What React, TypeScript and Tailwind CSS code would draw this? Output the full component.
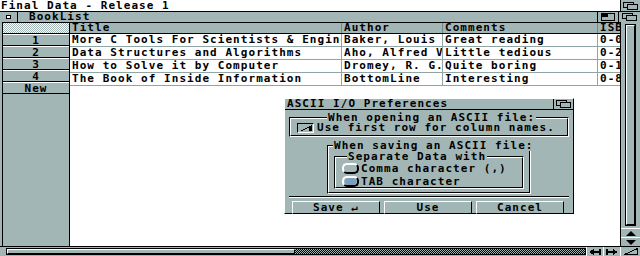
import React from "react";

const F = { fontFamily: '"DejaVu Sans Mono", "Liberation Mono", monospace' };
const gray = "bg-[#a3b6b6]";

function Depth() {
  return (
    <svg width="16" height="8" viewBox="0 0 16 8" shapeRendering="crispEdges">
      <rect x="0.5" y="0.5" width="10" height="5" fill="#a3b6b6" stroke="#000" />
      <rect x="4.5" y="2.5" width="10" height="5" fill="#a3b6b6" stroke="#000" />
    </svg>
  );
}

function Zoom() {
  return (
    <svg width="14" height="8" viewBox="0 0 14 8" shapeRendering="crispEdges">
      <rect x="0.5" y="0.5" width="13" height="7" fill="#a3b6b6" stroke="#000" />
      <rect x="1" y="1" width="6" height="3" fill="#000" />
    </svg>
  );
}

const rows = [
  ["1", "More C Tools For Scientists & Engineers", "Baker, Louis", "Great reading", "0-07"],
  ["2", "Data Structures and Algorithms", "Aho, Alfred V.", "Little tedious", "0-20"],
  ["3", "How to Solve it by Computer", "Dromey, R. G.", "Quite boring", "0-13"],
  ["4", "The Book of Inside Information", "BottomLine", "Interesting", "0-88"],
];

const cols = "grid grid-cols-[271px_101px_155px_23px]";
const cell = "h-[12px] overflow-hidden whitespace-nowrap pl-[2px]";

function Frame({ label, className, children, labelClass }: { label: string; className: string; children?: React.ReactNode; labelClass: string }) {
  return (
    <div className={"relative border border-t-black border-l-black border-b-white border-r-white " + className}>
      <div className="h-full w-full border border-t-white border-l-white border-b-black border-r-black">
        {children}
      </div>
      <div className={"absolute top-[-6px] h-[11px] leading-[11px] px-[1px] bg-[#a3b6b6] whitespace-nowrap " + labelClass}>{label}</div>
    </div>
  );
}

function Btn({ children }: { children: React.ReactNode }) {
  return (
    <div className="w-[88px] h-[13px] border border-t-white border-l-white border-b-black border-r-black flex items-center justify-center leading-[11px]">
      {children}
    </div>
  );
}

function Radio({ on }: { on?: boolean }) {
  return (
    <div className="w-[17px] h-[11px] rounded-[5px] border-2 border-t-white border-l-white border-b-black border-r-black flex items-center justify-center">
      {on && <div className="w-[11px] h-[7px] rounded-[3px] bg-[#7aa0bd]" />}
    </div>
  );
}

export default function App() {
  return (
    <div className="relative w-[640px] h-[256px] overflow-hidden bg-white text-black font-bold text-[11px] tracking-[1.05px] flex flex-col" style={F}>
      {/* screen title bar */}
      <div className="h-[11px] flex items-stretch bg-white">
        <div className="flex-1 leading-[11px] pl-[1px] whitespace-nowrap">Final Data - Release 1</div>
        <div className={"w-[20px] flex items-center justify-center border-l border-black " + gray}>
          <Depth />
        </div>
      </div>
      {/* window */}
      <div className="flex-1 flex flex-col">
        <div className={"h-[11px] flex items-stretch border-t border-black " + gray}>
          <div className="w-[18px] border-r border-black flex items-center justify-center">
            <div className="w-[5px] h-[4px] border border-black bg-white" />
          </div>
          <div className="flex-1 pl-[11px] leading-[10px] whitespace-nowrap">BookList</div>
          <div className="w-[21px] flex items-center justify-center border-l border-black">
            <Zoom />
          </div>
          <div className="w-[22px] flex items-center justify-center border-l border-black">
            <Depth />
          </div>
        </div>
        <div className="flex-1 flex min-h-0">
          <div className={"w-[3px] border-r border-black " + gray} />
          {/* row label column */}
          <div className={"w-[67px] flex flex-col border-r border-black " + gray}>
            <div className="h-[12px] border-y border-black bg-[repeating-conic-gradient(#ffffff_0%_25%,#a3b6b6_0%_50%)] bg-[length:2px_2px]" />
            {["1", "2", "3", "4", "New"].map((n) => (
              <div key={n} className="h-[12px] border-b border-black text-center leading-[11px] border-t border-t-white">
                {n}
              </div>
            ))}
            <div className="flex-1" />
          </div>
          {/* data */}
          <div className="w-[550px] flex flex-col">
            <div className={cols + " h-[12px] border-y border-black " + gray}>
              {["Title", "Author", "Comments", "ISBN"].map((h, i) => (
                <div key={h} className={"overflow-hidden whitespace-nowrap pl-[2px] leading-[10px] " + (i > 0 ? "border-l border-[#6f8a8a]" : "")}>
                  {h}
                </div>
              ))}
            </div>
            {rows.map((r) => (
              <div key={r[0]} className={cols + " border-b border-[#8fa6a6]"}>
                {r.slice(1).map((c, i) => (
                  <div key={i} className={cell + " leading-[12px] " + (i > 0 ? "border-l border-[#8fa6a6]" : "")}>
                    {c}
                  </div>
                ))}
              </div>
            ))}
          </div>
          {/* vertical scroller */}
          <div className={"w-[20px] flex flex-col border-l border-black " + gray}>
            <div className="flex-1 px-[4px] pt-[2px] pb-[2px] flex">
              <div className="flex-1 border border-black flex">
                <div className="flex-1 border border-t-white border-l-white border-b-black border-r-black" />
              </div>
            </div>
            <div className="h-[9px] border-t border-white flex items-center justify-center">
              <svg width="10" height="5" viewBox="0 0 10 5"><polygon points="5,0 10,5 0,5" fill="#000" /></svg>
            </div>
            <div className="h-[9px] border-t border-white flex items-center justify-center">
              <svg width="10" height="5" viewBox="0 0 10 5"><polygon points="0,0 10,0 5,5" fill="#000" /></svg>
            </div>
          </div>
        </div>
        {/* horizontal scroller */}
        <div className={"h-[10px] flex border-t border-black " + gray}>
          <div className="w-[586px] flex items-stretch pl-[6px] py-[1px]">
            <div className="flex-1 flex border border-black">
              <div className="w-[288px] border border-t-white border-l-white border-b-black border-r-black" />
              <div className="flex-1 bg-[repeating-conic-gradient(#000000_0%_25%,#a3b6b6_0%_50%)] bg-[length:2px_2px]" />
            </div>
          </div>
          <div className="w-[17px] flex items-center justify-center border-l border-white">
            <svg width="12" height="6" viewBox="0 0 12 6" shapeRendering="crispEdges"><polygon points="0,3 5,0 5,2 12,2 12,4 5,4 5,6" fill="#000" /><rect x="10" y="0" width="2" height="6" fill="#000" /></svg>
          </div>
          <div className="w-[17px] flex items-center justify-center border-l border-white">
            <svg width="12" height="6" viewBox="0 0 12 6" shapeRendering="crispEdges"><polygon points="12,3 7,0 7,2 0,2 0,4 7,4 7,6" fill="#000" /><rect x="0" y="0" width="2" height="6" fill="#000" /></svg>
          </div>
          <div className="w-[20px] flex items-center justify-center border-l border-white">
            <svg width="14" height="7" viewBox="0 0 14 7" shapeRendering="crispEdges"><polygon points="13.5,0.5 13.5,6.5 0.5,6.5" fill="#a3b6b6" stroke="#000" /></svg>
          </div>
        </div>
      </div>

      {/* dialog window */}
      <div className={"absolute left-[284px] top-[98px] w-[290px] h-[116px] border border-t-white border-l-white border-b-black border-r-black flex flex-col " + gray}>
        <div className="h-[11px] flex items-stretch border-b border-black">
          <div className="flex-1 pl-[2px] leading-[10px] whitespace-nowrap">ASCII I/O Preferences</div>
          <div className="w-[20px] flex items-center justify-center border-l border-black">
            <Depth />
          </div>
        </div>
        <div className="flex-1 flex flex-col px-[4px] pt-[7px]">
          <Frame label="When opening an ASCII file:" className="h-[20px]" labelClass="left-[37px]">
            <div className="flex items-center pl-[6px] pt-[4px] gap-[3px]">
              <div className="w-[17px] h-[10px] border border-t-black border-l-black border-b-white border-r-white flex items-center justify-center">
                <svg width="12" height="6" viewBox="0 0 12 6" shapeRendering="crispEdges">
                  <polygon points="0,6 12,0 12,1 2,6" fill="#000" />
                  <rect x="9" y="1" width="3" height="5" fill="#000" />
                </svg>
              </div>
              <div className="leading-[10px] whitespace-nowrap">Use first row for column names.</div>
            </div>
          </Frame>
          <div className="pl-[38px] pt-[8px]">
            <Frame label="When saving an ASCII file:" className="w-[204px] h-[49px]" labelClass="left-[5px]">
              <div className="pl-[5px] pt-[9px]">
                <Frame label="Separate Data with" className="w-[190px] h-[33px]" labelClass="left-[12px]">
                  <div className="flex flex-col pl-[6px] pt-[5px] gap-[2px]">
                    <div className="flex items-center gap-[2px]">
                      <Radio />
                      <div className="leading-[10px] whitespace-nowrap">Comma character (,)</div>
                    </div>
                    <div className="flex items-center gap-[2px]">
                      <Radio on />
                      <div className="leading-[10px] whitespace-nowrap">TAB character</div>
                    </div>
                  </div>
                </Frame>
              </div>
            </Frame>
          </div>
          <div className="mt-[2px] border-t border-black border-b border-b-white" />
          <div className="flex gap-[4px] pt-[3px] pl-[3px]">
            <Btn>Save ↵</Btn>
            <Btn>Use</Btn>
            <Btn>Cancel</Btn>
          </div>
        </div>
      </div>
    </div>
  );
}
